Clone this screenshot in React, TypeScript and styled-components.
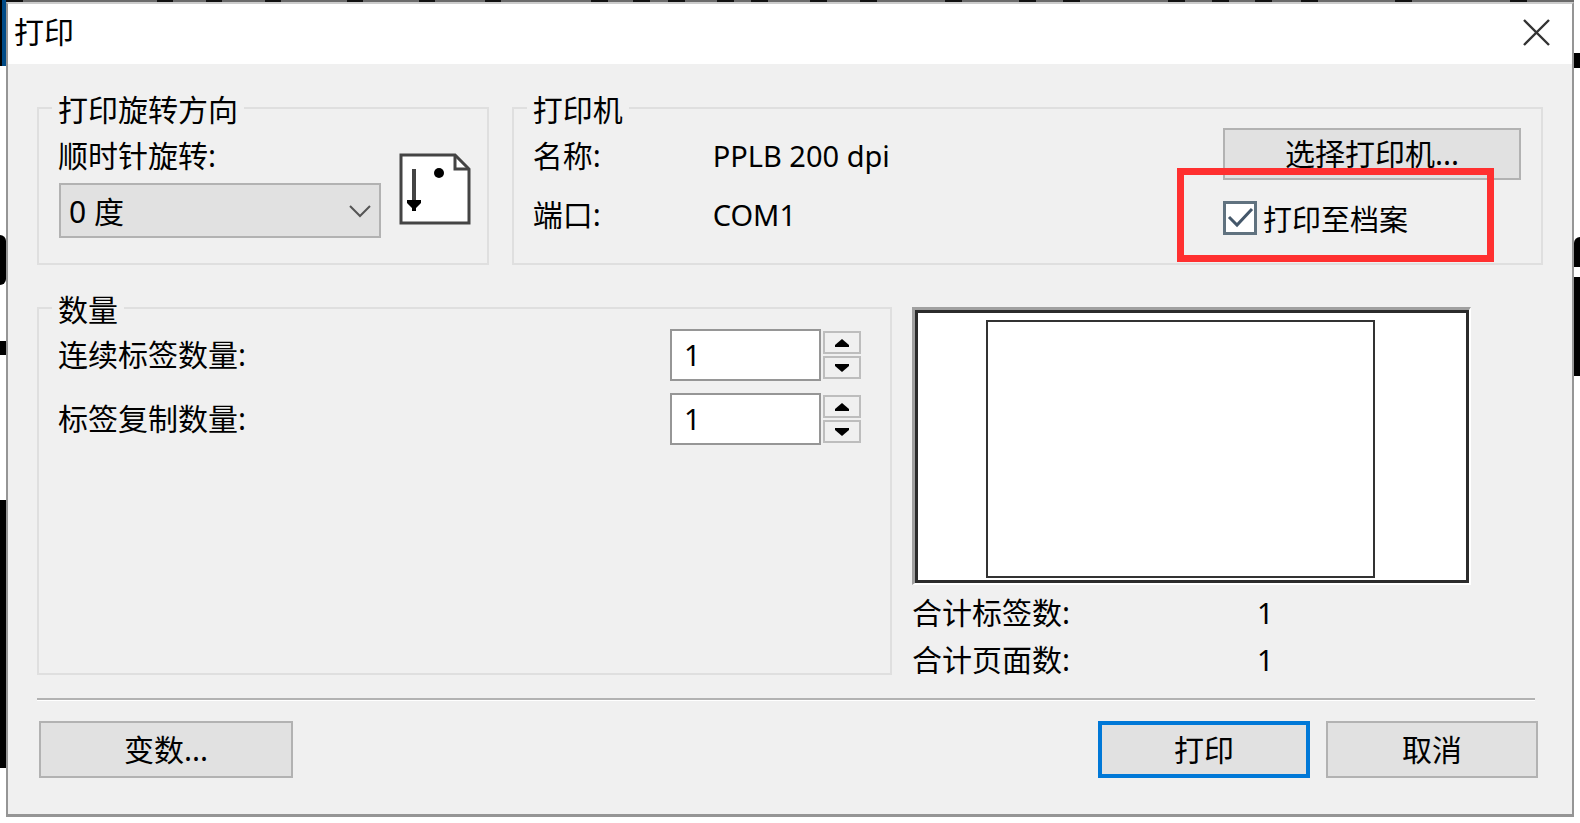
import React, { useState } from "react";
import styled, { createGlobalStyle, css } from "styled-components";

const GlobalStyle = createGlobalStyle`
  *, *::before, *::after { box-sizing: border-box; }
  body {
    margin: 0;
    background: #fff;
    color: #000;
    font: 30px/40px "Noto Sans", "Noto Sans CJK SC", sans-serif;
  }
  button, input, select { font: inherit; color: inherit; margin: 0; padding: 0; border-radius: 0; }
`;

const Desktop = styled.div`
  display: grid;
  grid-template-columns: 6px 1fr 6px;
  min-height: 823px;
`;

const Edge = styled.div`
  display: flex;
  flex-direction: column;
`;

const EdgeBlock = styled.div<{ $h: number; $color?: string; $round?: string }>`
  height: ${(p) => p.$h}px;
  background: ${(p) => p.$color ?? "transparent"};
  border-radius: ${(p) => p.$round ?? "0"};
`;

const Column = styled.div`
  display: flex;
  flex-direction: column;
  min-width: 0;
`;

const TopEdge = styled.svg`
  display: block;
  width: 100%;
  height: 2px;
  background: #6b6b6b;
`;

const Dialog = styled.main`
  display: flex;
  flex-direction: column;
  background: #f0f0f0;
  border: 2px solid #959595;
  border-top-color: #ccc;
  border-bottom-width: 3px;
`;

const TitleBar = styled.header`
  display: flex;
  align-items: center;
  justify-content: space-between;
  height: 60px;
  padding: 0 22px 4px 6px;
  background: #fff;
`;

const Title = styled.h1`
  margin: 0;
  font-size: 30px;
  font-weight: 400;
`;

const CloseButton = styled.button`
  display: flex;
  border: 0;
  background: none;
`;

const Content = styled.form`
  display: flex;
  flex-direction: column;
  padding: 24px 29px 36px;
`;

const TopRow = styled.div`
  display: grid;
  grid-template-columns: 452fr 1032fr;
  gap: 23px;
`;

const Group = styled.fieldset<{ $h: number }>`
  min-width: 0;
  height: ${(p) => p.$h}px;
  margin: 0;
  padding: 0 20px;
  border: 2px solid #dfdfdf;
`;

const Legend = styled.legend`
  margin-left: -7px;
  padding: 0 6px;
  height: 40px;
  line-height: 44px;
`;

const Rotation = styled.div`
  display: flex;
  justify-content: space-between;
  align-items: flex-end;
  margin-right: -4px;
  padding-top: 8px;
`;

const RotationField = styled.div`
  display: flex;
  flex-direction: column;
  gap: 7px;
  width: 322px;
  label { margin-left: -1px; }
`;

const SelectBox = styled.div`
  display: grid;
  align-items: center;
  > * { grid-area: 1 / 1; }
  > svg { justify-self: end; margin-right: 10px; pointer-events: none; }
`;

const Select = styled.select`
  appearance: none;
  width: 100%;
  height: 55px;
  padding: 2px 8px 0;
  border: 2px solid #b2b2b2;
  background: #e1e1e1;
`;

const PageIcon = styled.svg`
  display: block;
  margin-bottom: 13px;
`;

const PrinterBody = styled.div`
  display: flex;
  justify-content: space-between;
`;

const PrinterFacts = styled.dl`
  display: grid;
  grid-template-columns: 180px auto;
  row-gap: 19px;
  align-content: start;
  margin: 0 0 0 -1px;
  padding-top: 8px;
  dd { margin: 0; font-size: 29px; }
`;

const PrinterActions = styled.div`
  display: flex;
  flex-direction: column;
  gap: 20px;
  width: 298px;
  position: relative;
`;

const Button = styled.button<{ $w?: number; $h?: number; $primary?: boolean }>`
  width: ${(p) => (p.$w ? p.$w + "px" : "100%")};
  height: ${(p) => p.$h ?? 57}px;
  background: #e1e1e1;
  border: 2px solid #b2b2b2;
  ${(p) => p.$primary && css`border: 4px solid #0078d7;`}
`;

const CheckLabel = styled.label`
  display: flex;
  align-items: center;
  gap: 6px;
  height: 40px;
  font-size: 29px;
`;

const CheckMark = styled.span`
  display: grid;
  width: 34px;
  height: 34px;
  margin-bottom: 4px;
  > * { grid-area: 1 / 1; }
  > svg { pointer-events: none; }
`;

const Check = styled.input`
  appearance: none;
  width: 34px;
  height: 34px;
  border: 3px solid #60727f;
  background: #fff;
`;

const Highlight = styled.div`
  position: absolute;
  left: -46px;
  top: 40px;
  width: 317px;
  height: 94px;
  border: 7px solid #ff3030;
  pointer-events: none;
`;

const MiddleRow = styled.div`
  display: grid;
  grid-template-columns: 855fr 631fr;
  gap: 20px;
  margin-top: 23px;
`;

const Quantities = styled.div`
  display: flex;
  flex-direction: column;
  gap: 12px;
  margin: 0 9px 0 -1px;
  padding-top: 1px;
`;

const QuantityRow = styled.div`
  display: flex;
  align-items: center;
  height: 52px;
  label { flex: 1; }
`;

const NumberInput = styled.input`
  width: 151px;
  height: 52px;
  padding: 0 12px 2px;
  border: 2px solid #969696;
  background: #fff;
  font-size: 29px;
`;

const Spinner = styled.div`
  display: flex;
  flex-direction: column;
  gap: 2px;
  margin-left: 2px;
`;

const SpinButton = styled.button`
  display: flex;
  align-items: center;
  justify-content: center;
  width: 38px;
  height: 23px;
  border: 2px solid #bdbdbd;
  background: #f0f0f0;
`;

const Summary = styled.section`
  display: flex;
  flex-direction: column;
  padding-top: 19px;
`;

const Preview = styled.div`
  display: flex;
  justify-content: center;
  width: 559px;
  height: 278px;
  padding: 10px 0 0;
  background: #fff;
  border-style: solid;
  border-width: 3px 2px 2px 3px;
  border-color: #a0a0a0 #fff #fff #a0a0a0;
  box-shadow: inset 0 0 0 3px #2b2b2b;
`;

const PreviewLabel = styled.div`
  width: 389px;
  height: 258px;
  margin-right: 24px;
  border: 2px solid #333;
`;

const Totals = styled.dl`
  display: grid;
  grid-template-columns: 345px auto;
  row-gap: 7px;
  margin: 8px 0 0;
  dd { margin: 0; font-size: 29px; }
`;

const Divider = styled.hr`
  width: calc(100% - 8px);
  height: 3px;
  margin: 18px 0 20px;
  border: 0;
  background: #b2b2b2;
  border-bottom: 1px solid #fff;
`;

const Footer = styled.footer`
  display: flex;
  gap: 16px;
  padding: 0 5px 0 2px;
  > :first-child { margin-right: auto; }
`;

const dashes = [
  [0, 17], [151, 16], [200, 16], [259, 16], [341, 16], [413, 16], [479, 16],
  [585, 17], [627, 17], [662, 17], [711, 17], [745, 17], [804, 17], [854, 17],
  [939, 17], [1013, 17], [1057, 17], [1162, 17], [1206, 17], [1249, 17], [1295, 17], [1389, 17], [1504, 17],
];

function QuantityField({ id, label }: { id: string; label: string }) {
  const [value, setValue] = useState(1);
  return (
    <QuantityRow>
      <label htmlFor={id}>{label}</label>
      <NumberInput id={id} inputMode="numeric" value={value} onChange={(e) => setValue(Number(e.target.value) || 0)} />
      <Spinner>
        <SpinButton type="button" aria-label={`${label} +`} onClick={() => setValue(value + 1)}>
          <svg width="14" height="8"><path d="M7 0 L14 6 V8 H0 V6 Z" /></svg>
        </SpinButton>
        <SpinButton type="button" aria-label={`${label} -`} onClick={() => setValue(Math.max(1, value - 1))}>
          <svg width="14" height="8"><path d="M7 8 L14 2 V0 H0 V2 Z" /></svg>
        </SpinButton>
      </Spinner>
    </QuantityRow>
  );
}

export default function App() {
  const [toFile, setToFile] = useState(true);
  return (
    <>
      <GlobalStyle />
      <Desktop>
        <Edge>
          <EdgeBlock $h={66} $color="linear-gradient(90deg, #000 2px, #004a86 2px)" />
          <EdgeBlock $h={169} />
          <EdgeBlock $h={50} $color="#000" $round="0 6px 6px 0" />
          <EdgeBlock $h={56} />
          <EdgeBlock $h={14} $color="#000" />
          <EdgeBlock $h={145} />
          <EdgeBlock $h={268} $color="#000" />
        </Edge>
        <Column>
          <TopEdge aria-hidden="true">
            {dashes.map(([x, w]) => <rect key={x} x={x} width={w} height="2" fill="#111" />)}
          </TopEdge>
          <Dialog>
            <TitleBar>
              <Title>打印</Title>
              <CloseButton type="button" aria-label="关闭">
                <svg width="27" height="27" fill="none" stroke="#333" strokeWidth="2.4"><path d="M1 1 L26 26 M26 1 L1 26" /></svg>
              </CloseButton>
            </TitleBar>
            <Content onSubmit={(e) => e.preventDefault()}>
              <TopRow>
                <Group $h={177}>
                  <Legend>打印旋转方向</Legend>
                  <Rotation>
                    <RotationField>
                      <label htmlFor="rotation">顺时针旋转:</label>
                      <SelectBox>
                        <Select id="rotation"><option>0 度</option></Select>
                        <svg width="22" height="14" fill="none" stroke="#555" strokeWidth="2"><path d="M1 2 L11 12 L21 2" /></svg>
                      </SelectBox>
                    </RotationField>
                    <PageIcon width="72" height="72" aria-hidden="true">
                      <path d="M2 2 H56 L70 16 V70 H2 Z" fill="#fff" stroke="#444" strokeWidth="3" />
                      <path d="M56 2 V16 H70" fill="none" stroke="#444" strokeWidth="3" />
                      <path d="M15 16 V50" stroke="#444" strokeWidth="4" />
                      <path d="M8 47 H22 V50 L17 55 V58 H13 V55 L8 50 Z" />
                      <circle cx="40" cy="20" r="5" />
                    </PageIcon>
                  </Rotation>
                </Group>
                <Group $h={177}>
                  <Legend>打印机</Legend>
                  <PrinterBody>
                    <PrinterFacts>
                      <dt>名称:</dt><dd>PPLB 200 dpi</dd>
                      <dt>端口:</dt><dd>COM1</dd>
                    </PrinterFacts>
                    <PrinterActions>
                      <Button type="button" $h={52}>选择打印机...</Button>
                      <CheckLabel>
                        <CheckMark>
                          <Check type="checkbox" checked={toFile} onChange={(e) => setToFile(e.target.checked)} />
                          {toFile && <svg width="34" height="34" fill="none" stroke="#44576a" strokeWidth="3"><path d="M6 16 L14 24 L29 8" /></svg>}
                        </CheckMark>
                        打印至档案
                      </CheckLabel>
                      <Highlight />
                    </PrinterActions>
                  </PrinterBody>
                </Group>
              </TopRow>
              <MiddleRow>
                <Group $h={387}>
                  <Legend>数量</Legend>
                  <Quantities>
                    <QuantityField id="serial" label="连续标签数量:" />
                    <QuantityField id="copies" label="标签复制数量:" />
                  </Quantities>
                </Group>
                <Summary>
                  <Preview><PreviewLabel /></Preview>
                  <Totals>
                    <dt>合计标签数:</dt><dd>1</dd>
                    <dt>合计页面数:</dt><dd>1</dd>
                  </Totals>
                </Summary>
              </MiddleRow>
              <Divider />
              <Footer>
                <Button type="button" $w={254}>变数...</Button>
                <Button type="submit" $w={212} $primary>打印</Button>
                <Button type="button" $w={212}>取消</Button>
              </Footer>
            </Content>
          </Dialog>
        </Column>
        <Edge>
          <EdgeBlock $h={53} />
          <EdgeBlock $h={15} $color="#000" />
          <EdgeBlock $h={169} />
          <EdgeBlock $h={30} $color="#000" $round="6px 0 0 0" />
          <EdgeBlock $h={10} />
          <EdgeBlock $h={99} $color="#000" />
        </Edge>
      </Desktop>
    </>
  );
}
